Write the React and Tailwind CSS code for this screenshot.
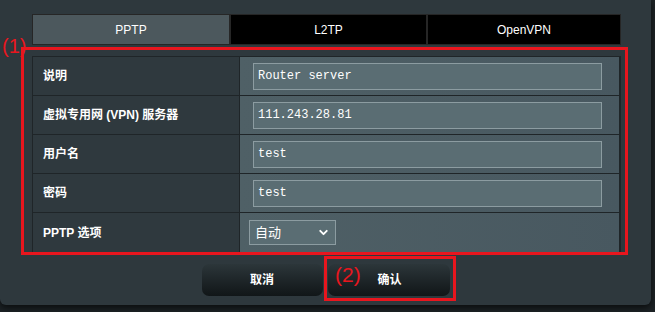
import { ChevronDown } from "lucide-react";

const rows = [
  { label: "说明", value: "Router server" },
  { label: "虚拟专用网 (VPN) 服务器", value: "111.243.28.81" },
  { label: "用户名", value: "test" },
  { label: "密码", value: "test" },
];

const sans = "font-['Liberation_Sans','Noto_Sans_CJK_SC',sans-serif]";

export default function App() {
  return (
    <div className="relative w-[655px] h-[312px] bg-[#1c2225] overflow-hidden">
      <div className="w-[651px] h-[305px] bg-[#2e383d] rounded-b-md shadow-[0_3px_6px_rgba(0,0,0,0.6)] pt-[14px] pl-[32px] pr-[30px]">
        {/* tabs */}
        <div className={`flex h-[31px] border border-[#262626] text-[12px] text-white ${sans}`}>
          <div className="w-[196px] flex items-center justify-center bg-[#4c585d]">PPTP</div>
          <div className="w-[197px] flex items-center justify-center bg-black border-l-2 border-[#262626]">L2TP</div>
          <div className="flex-1 flex items-center justify-center bg-black border-l-2 border-[#262626]">OpenVPN</div>
        </div>

        {/* table */}
        <div className={`mt-[11px] border border-[#1f2528] border-r-2 ${sans}`}>
          {rows.map((r, i) => (
            <div key={i} className="flex h-[39px] border-b border-[#1f2528]">
              <div className="w-[206px] bg-[#2f393e] flex items-center pl-[10px] text-[12px] font-bold text-white">
                {r.label}
              </div>
              <div className="flex-1 border-l border-[#1f2528] bg-gradient-to-r from-[#4f6066] to-[#485860] flex items-center pl-[13px] pr-[17px]">
                <div className="w-full h-[27px] bg-[#5a6d73] border border-[#8c9ca1] flex items-center pl-[4px] font-['Liberation_Mono',monospace] text-[12px] text-white">
                  {r.value}
                </div>
              </div>
            </div>
          ))}
          <div className="flex h-[39px]">
            <div className="w-[206px] bg-[#2f393e] flex items-center pl-[10px] text-[12px] font-bold text-white">
              PPTP 选项
            </div>
            <div className="flex-1 border-l border-[#1f2528] bg-gradient-to-r from-[#4f6066] to-[#485860] flex items-center pl-[9px]">
              <div className="w-[87px] h-[25px] bg-[#5a6d73] border border-[#8c9ca1] flex items-center justify-between pl-[5px] pr-[5px] text-[13px] text-white">
                <span>自动</span>
                <ChevronDown size={13} strokeWidth={3.5} />
              </div>
            </div>
          </div>
        </div>

        {/* buttons */}
        <div className={`mt-[11px] flex justify-center gap-[5px] -ml-[2px] text-[12px] font-bold text-white ${sans}`}>
          <div className="w-[121px] h-[32px] rounded-[7px] bg-gradient-to-b from-[#2c363a] to-[#111618] flex items-center justify-center">
            取消
          </div>
          <div className="w-[122px] h-[32px] rounded-[7px] bg-gradient-to-b from-[#2c363a] to-[#111618] flex items-center justify-center pl-[2px]">
            确认
          </div>
        </div>
      </div>

      {/* annotations */}
      <div className="absolute left-[21px] top-[47px] w-[607px] h-[208px] border-[3px] border-[#e8161e]" />
      <div className="absolute left-[2px] top-[34px] text-[20px] leading-[24px] text-[#e8161e] font-['Liberation_Sans',sans-serif]">
        (1)
      </div>
      <div className="absolute left-[324px] top-[256px] w-[132px] h-[45px] border-[3px] border-[#e8161e]" />
      <div className="absolute left-[335px] top-[263px] text-[21px] leading-[24px] text-[#e8161e] font-['Liberation_Sans',sans-serif]">
        (2)
      </div>
    </div>
  );
}
